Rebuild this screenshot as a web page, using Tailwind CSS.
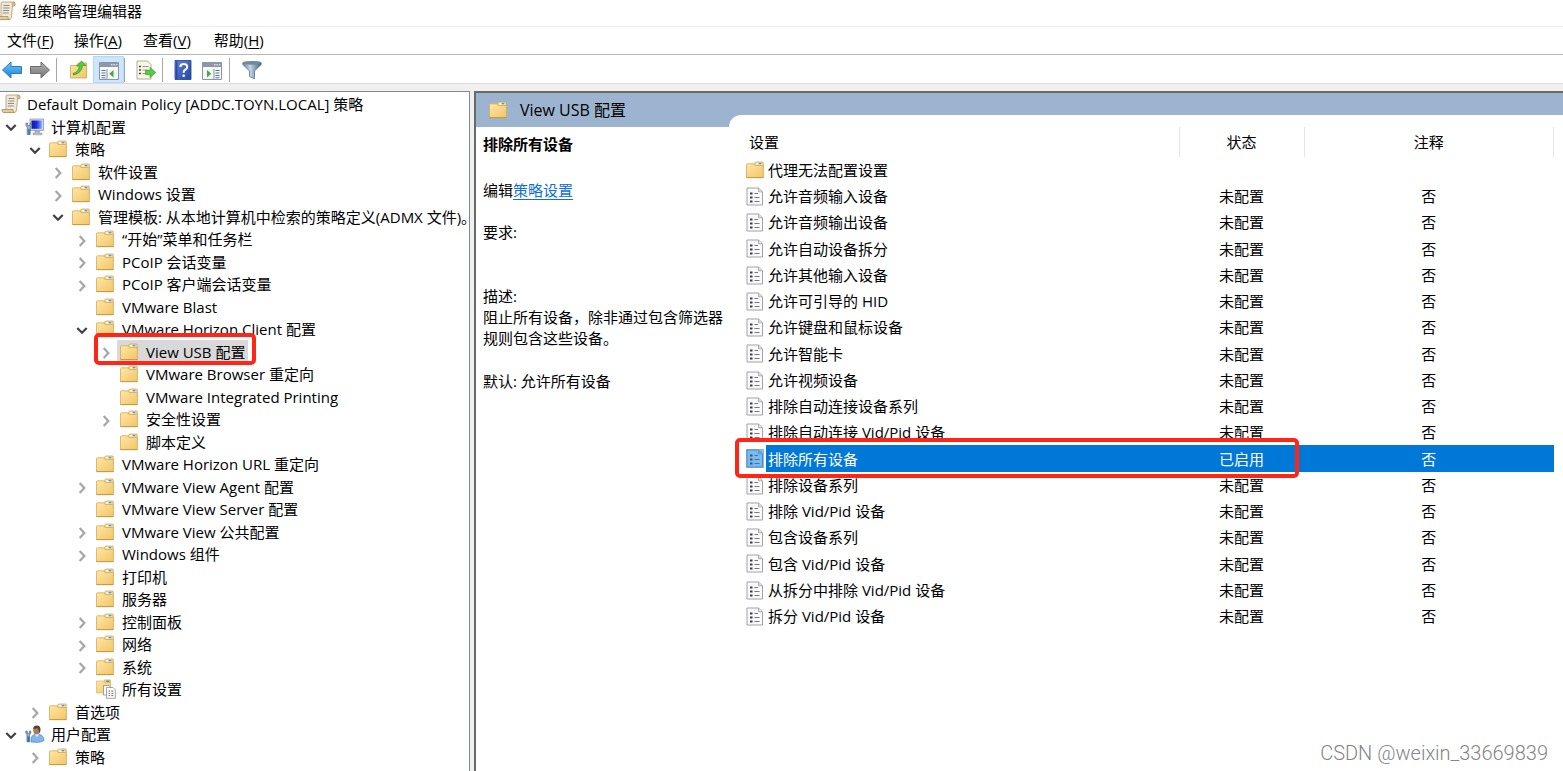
<!DOCTYPE html>
<html lang="zh-CN">
<head>
<meta charset="utf-8">
<title>组策略管理编辑器</title>
<script src="https://cdn.jsdelivr.net/npm/@tailwindcss/browser@4"></script>
</head>
<body class="bg-white text-black text-[15px] font-['Open_Sans','Noto_Sans_CJK_SC',sans-serif]">
<svg width="0" height="0" class="absolute" aria-hidden="true">
  <defs>
    <linearGradient id="gFolder" x1="0" y1="0" x2="1" y2="1"><stop offset="0" stop-color="#ffe7a4"/><stop offset="1" stop-color="#f1c568"/></linearGradient>
    <linearGradient id="gBlue" x1="0" y1="0" x2="0" y2="1"><stop offset="0" stop-color="#6cc8fa"/><stop offset="1" stop-color="#1a82d6"/></linearGradient>
    <linearGradient id="gGray" x1="0" y1="0" x2="0" y2="1"><stop offset="0" stop-color="#b0b0b0"/><stop offset="1" stop-color="#777"/></linearGradient>
    <linearGradient id="gHelp" x1="0" y1="0" x2="1" y2="1"><stop offset="0" stop-color="#5f84dc"/><stop offset="1" stop-color="#2444a8"/></linearGradient>
    <linearGradient id="gFunnel" x1="0" y1="0" x2="1" y2="0"><stop offset="0" stop-color="#5f7f9c"/><stop offset=".4" stop-color="#c4d6e4"/><stop offset="1" stop-color="#3f5d7a"/></linearGradient>
    <linearGradient id="gScreen" x1="0" y1="0" x2="1" y2="0"><stop offset="0" stop-color="#1018a8"/><stop offset=".5" stop-color="#1c2ee0"/><stop offset="1" stop-color="#8fb4f8"/></linearGradient>
    <symbol id="folder" viewBox="0 0 18 18">
      <path d="M7.500 5 9 1.600Q9.200 1 10 1H16.500Q17.300 1 17.300 1.800V8H7.500Z" fill="#f5d68c" stroke="#d0a24c" stroke-width=".7"/>
      <rect x="10.500" y="1.900" width="5.500" height="1.800" fill="#fff"/><rect x="12.500" y="1.900" width="3" height="1.500" fill="#4a9ad8"/>
      <path d="M.5 3.500Q.5 2.800 1.200 2.800H7.800L9 4.500H16.600Q17.400 4.500 17.400 5.300V16.600H.5Z" fill="url(#gFolder)" stroke="#d6ab54" stroke-width=".8"/>
      <path d="M.5 16.600H17.500" stroke="#c0953f" stroke-width=".9"/>
    </symbol>
    <symbol id="scroll" viewBox="0 0 20 20">
      <path d="M5 2Q5 1 6.500 1H17Q19 1 19 3T17.500 4.800H16.500L15.500 16Q15.300 18.500 13 18.500H3L5 15Z" fill="#f3e9cf" stroke="#a89878" stroke-width=".8"/>
      <path d="M16.500 4.800Q15.300 2 17 1Q19 1 19 3T17.500 4.800Z" fill="#d5bf8e" stroke="#a89878" stroke-width=".6"/>
      <path d="M1 15.500H12Q11.500 18.500 13.500 18.600H3Q.6 18.600 1 15.500Z" fill="#e0cc9c" stroke="#a89060" stroke-width=".8"/>
      <path d="M7.500 4.500H13.500M7.300 7H13.300M7 9.500H13M6.800 12H12.800" stroke="#8c8c98" stroke-width="1"/>
    </symbol>
    <symbol id="computer" viewBox="0 0 20 18">
      <path d="M5 1H18.500V12.500H5Z" fill="#d4dae4" stroke="#8d9ab0" stroke-width=".8"/>
      <path d="M6.500 2.500H17V10.800H6.500Z" fill="url(#gScreen)"/>
      <path d="M10 13H14.500V15H17V16.800H8V15H10Z" fill="#b4bac4" stroke="#8a929e" stroke-width=".5"/>
      <path d="M.8 5.200Q.5 8 2.200 9V16.500H5.200V9Q7 8 6.500 5.200L5 5V7.500H2.500V5Z" fill="#9eb6d0" stroke="#56708c" stroke-width=".7"/>
      <path d="M3 11H5V16.500H3Z" fill="#3c82c8"/>
    </symbol>
    <symbol id="user" viewBox="0 0 20 18">
      <path d="M6 17Q5.500 10 10.500 9H13.500Q19 10.500 19 15.500Q17 17.300 12 17.300Z" fill="#83b6ea" stroke="#4a7fb8" stroke-width=".7"/>
      <path d="M10 9.200 12 12 14 9.200Z" fill="#eef5ff"/>
      <ellipse cx="11.500" cy="5" rx="3.300" ry="4.200" fill="#ad7a52"/>
      <path d="M8.200 4Q8.300.4 12 .4T15.500 5Q15.500 8 13.800 8.600Q14.500 5 12.500 3.200Z" fill="#4d4640"/>
      <path d="M.8 6.200Q.5 8.700 2 9.700V16.800H4.600V9.700Q6.200 8.700 5.800 6.200L4.600 6V8.200H2.200V6Z" fill="#9eb6d0" stroke="#3f5c80" stroke-width=".7"/>
      <path d="M2.500 11.500H4.300V16.800H2.500Z" fill="#2f70b8"/>
    </symbol>
    <symbol id="policy" viewBox="0 0 18 19">
      <path d="M1 1H12.500L16.500 4.800V18H1Z" fill="#fafafa" stroke="#a2a2a2" stroke-width="1"/>
      <path d="M12.500 1V4.800H16.500" fill="#dcdcdc" stroke="#a2a2a2" stroke-width=".8"/>
      <path d="M4 5.500H6.500V7.500H4ZM4 9.500H6.500V11.500H4ZM4 13.500H6.500V15.500H4Z" fill="#3c3c4c"/>
      <path d="M8.500 6.500H12M8.500 10.500H13.500M8.500 14.500H13.500" stroke="#777783" stroke-width="1"/>
    </symbol>
    <symbol id="allset" viewBox="0 0 20 20">
      <path d="M7.500 4 8.500.9H14.500V6H7.500Z" fill="#f5d68c" stroke="#d9ae58" stroke-width=".7"/>
      <rect x="10" y="1.500" width="3.500" height="1.500" fill="#4a9ad8"/>
      <path d="M.5 2H7.500L8.500 3.500H14.500V14H.5Z" fill="url(#gFolder)" stroke="#dcb45f" stroke-width=".7"/>
      <path d="M7.500 6.500H13L15 8.500V16H7.500Z" fill="#fff" stroke="#8e8e8e" stroke-width=".8"/>
      <path d="M10.500 8.500H17L19.300 10.800V19.300H10.500Z" fill="#fff" stroke="#8e8e8e" stroke-width=".8"/>
      <path d="M12.500 12H14M12.500 14.300H14M12.500 16.600H14M15.300 12H17.300M15.300 14.300H17.300M15.300 16.600H17.300" stroke="#666672" stroke-width="1"/>
    </symbol>
    <symbol id="open" viewBox="0 0 12 10"><path d="M1.300 2 6 6.800 10.700 2" fill="none" stroke="#404040" stroke-width="2.200"/></symbol>
    <symbol id="closed" viewBox="0 0 10 12"><path d="M3 1.700 7 6 3 10.300" fill="none" stroke="#a6a6a6" stroke-width="1.900"/></symbol>
  </defs>
</svg>

<div class="relative flex h-screen flex-col overflow-hidden">
  <header class="flex h-[27px] shrink-0 items-center gap-[6px] border-b border-[#ececec] pb-[4px]">
    <svg class="-ml-1 h-5 w-5" aria-hidden="true"><use href="#scroll"/></svg>
    <h1 class="text-[15px] leading-5">组策略管理编辑器</h1>
  </header>

  <nav class="flex h-[28px] shrink-0 items-center gap-[6px] border-b border-[#b8b8b8] pb-px" aria-label="菜单">
    <button class="pl-[7px] pr-2 leading-6">文件(<u class="underline-offset-2">F</u>)</button>
    <button class="pl-[6px] pr-2 leading-6">操作(<u class="underline-offset-2">A</u>)</button>
    <button class="pl-[7px] pr-2 leading-6">查看(<u class="underline-offset-2">V</u>)</button>
    <button class="pl-[9px] pr-2 leading-6">帮助(<u class="underline-offset-2">H</u>)</button>
  </nav>

  <div class="flex h-[29px] shrink-0 items-center border-b border-[#dcdcdc] pt-px" role="toolbar" aria-label="工具栏">
    <button class="flex w-6 justify-center pr-px pt-px" aria-label="后退"><svg class="h-5 w-[22px]" viewBox="0 0 22 20"><path d="M1.500 10 10 2V6.500H20.500V13.500H10V18Z" fill="url(#gBlue)" stroke="#2b7cc0" stroke-width="1"/></svg></button>
    <button class="flex w-8 justify-center pt-px" aria-label="前进"><svg class="h-5 w-[22px]" viewBox="0 0 22 20"><path d="M20.500 10 12 2V6.500H1.500V13.500H12V18Z" fill="url(#gGray)" stroke="#6c6c6c" stroke-width="1"/></svg></button>
    <span class="h-6 w-px bg-[#a8a8a8]"></span>
    <button class="ml-[7px] flex h-[27px] w-[29px] items-center justify-center" aria-label="上移一级"><svg class="h-5 w-5" viewBox="0 0 20 20"><path d="M1.500 5.500H8L9.500 3H17.500V18H1.500Z" fill="url(#gFolder)" stroke="#cfa552" stroke-width=".8"/><path d="M4 13.500Q9.500 12 10.500 6H7.500L12.500 1 17 5.500H13.500Q13 13 4.500 15Z" fill="#55cc3c" stroke="#2c9a22" stroke-width=".7"/></svg></button>
    <button class="flex h-[27px] w-[31px] items-center justify-center border border-[#b4d8fa] bg-[#cce6fd] pt-[3px]" aria-label="显示/隐藏控制台树"><svg class="h-[18px] w-5" viewBox="0 0 20 18"><path d="M.5.5H19.500V17.500H.5Z" fill="#f4f6f8" stroke="#8b95a2"/><path d="M1 1H19V5H1Z" fill="#8a98aa"/><path d="M12 2.800H13.500M14.500 2.800H16M17 2.800H18.300M1 6.500H19" stroke="#fff"/><path d="M8 7V17" stroke="#8b95a2"/><path d="M2.500 8.500H6.500M2.500 11H6.500M2.500 13.500H6.500M2.500 15.800H6.500" stroke="#55799c"/><path d="M14.500 8V15.500L10.300 11.800Z" fill="#3fae30"/></svg></button>
    <span class="h-6 w-px bg-[#a8a8a8]"></span>
    <button class="ml-[6px] flex h-[27px] w-[29px] items-center justify-center" aria-label="导出列表"><svg class="h-5 w-5" viewBox="0 0 20 20"><path d="M1 1H11.500L15 4.500V19H1Z" fill="#fbf7e8" stroke="#9b9b8c" stroke-width=".8"/><path d="M3 6.500H5M3 10H5M3 13.500H5" stroke="#444" stroke-width="1.500"/><path d="M6.500 6.500H12.500M6.500 10H12.500M6.500 13.500H12.500" stroke="#999"/><path d="M9.500 10.500H14V7.500L19.700 12.500 14 17.500V14.500H9.500Z" fill="#58cc40" stroke="#30a024" stroke-width=".7"/></svg></button>
    <span class="ml-[2px] h-6 w-px bg-[#a8a8a8]"></span>
    <button class="ml-[3px] flex h-[27px] w-[31px] items-center justify-center pl-[3px]" aria-label="帮助"><svg class="h-5 w-[18px]" viewBox="0 0 18 20"><path d="M1 .5H17V19.500H1Z" fill="url(#gHelp)" stroke="#24408c" stroke-width=".8"/><path d="M2.800 1V19" stroke="#203c90" stroke-width="1"/><path d="M6.300 7Q6.300 4 9.800 4T13.200 7Q13.200 8.500 11.300 9.700T9.700 12.800" fill="none" stroke="#fff" stroke-width="2"/><circle cx="9.700" cy="15.800" r="1.300" fill="#fff"/></svg></button>
    <button class="ml-px flex h-[27px] w-[27px] items-center justify-center pt-[3px]" aria-label="显示/隐藏操作窗格"><svg class="h-[18px] w-5" viewBox="0 0 20 18"><path d="M.5.5H19.500V17.500H.5Z" fill="#f4f6f8" stroke="#8b95a2"/><path d="M1 1H19V5H1Z" fill="#8a98aa"/><path d="M12 2.800H13.500M14.500 2.800H16M17 2.800H18.300M1 6.500H19" stroke="#fff"/><path d="M12 7V17" stroke="#8b95a2"/><path d="M13.500 8.500H17.500M13.500 11H17.500M13.500 13.500H17.500M13.500 15.800H17.500" stroke="#55799c"/><path d="M5 8V15.500L9.200 11.800Z" fill="#3fae30"/></svg></button>
    <span class="ml-[4px] h-6 w-px bg-[#a8a8a8]"></span>
    <button class="ml-[7px] flex h-[27px] w-[29px] items-center justify-center pt-px" aria-label="筛选器"><svg class="h-5 w-5" viewBox="0 0 20 20"><path d="M.8 3Q.8 1.500 10 1.500T19.200 3V4.500L12.500 11V18.800L7.500 16.500V11L.8 4.500Z" fill="url(#gFunnel)" stroke="#56738e" stroke-width=".8"/><ellipse cx="10" cy="3.200" rx="8.300" ry="1.500" fill="#71899e"/></svg></button>
  </div>

  <div class="flex min-h-0 grow bg-[#f0f0f0] pt-[7px]">
    <aside class="w-[31%] max-w-[470px] shrink-0 overflow-hidden border-t border-r border-[#828790] bg-white pt-px">
      <ul id="tree" role="tree" aria-label="控制台树"></ul>
    </aside>

    <main class="ml-1 flex min-w-0 grow flex-col border-t-2 border-l-2 border-[#696969] bg-white">
      <div class="flex min-h-0 grow bg-[#9db4d0]">
        <section class="flex w-[253px] shrink-0 flex-col">
          <h2 class="flex h-[34px] shrink-0 items-center gap-3 pl-3 text-base"><svg class="h-[18px] w-5" aria-hidden="true"><use href="#folder"/></svg>View USB 配置</h2>
          <div class="grow bg-white pl-[7px] pt-[7px] leading-[21px]">
            <h3 class="font-bold">排除所有设备</h3>
            <p class="mt-[25px]">编辑<a href="#" class="text-[#0f6fd6] underline underline-offset-3">策略设置</a></p>
            <p class="mt-[21px]">要求:</p>
            <p class="mt-[43px]">描述:</p>
            <p class="whitespace-nowrap">阻止所有设备，除非通过包含筛选器<br>规则包含这些设备。</p>
            <p class="mt-[22px]">默认: 允许所有设备</p>
          </div>
        </section>
        <section class="mt-[22px] min-w-0 grow rounded-tl-[12px] bg-white pr-[9px] pt-[12px]">
          <table class="w-full table-fixed border-collapse">
            <colgroup><col class="w-[450px]"><col class="w-[125px]"><col></colgroup>
            <thead><tr class="h-[30px]">
              <th class="border-r border-[#e5e5e5] p-0 pl-5 text-left font-normal leading-5">设置</th>
              <th class="border-r border-[#e5e5e5] p-0 text-center font-normal leading-5">状态</th>
              <th class="border-r border-[#e5e5e5] p-0 text-center font-normal leading-5">注释</th>
            </tr></thead>
            <tbody id="rows"></tbody>
          </table>
        </section>
      </div>
    </main>
  </div>
  <p class="absolute bottom-[6px] right-[15px] font-['Roboto',sans-serif] text-[20px] font-light leading-6 text-[#858585]">CSDN @weixin_33669839</p>
</div>

<script>
const indent = ['pl-0', 'pl-0', 'pl-[24px]', 'pl-[47px]', 'pl-[71px]', 'pl-[95px]'];
// level, arrow (o = open, c = closed, empty = none), icon, label
const tree = [
  [0, '', 'scroll', 'Default Domain Policy [ADDC.TOYN.LOCAL] 策略'],
  [1, 'o', 'computer', '计算机配置'],
  [2, 'o', 'folder', '策略'],
  [3, 'c', 'folder', '软件设置'],
  [3, 'c', 'folder', 'Windows 设置'],
  [3, 'o', 'folder', '管理模板: 从本地计算机中检索的策略定义(ADMX 文件)。'],
  [4, 'c', 'folder', '“开始”菜单和任务栏'],
  [4, 'c', 'folder', 'PCoIP 会话变量'],
  [4, 'c', 'folder', 'PCoIP 客户端会话变量'],
  [4, '', 'folder', 'VMware Blast'],
  [4, 'o', 'folder', 'VMware Horizon Client 配置'],
  [5, 'c', 'folder', 'View USB 配置'],
  [5, '', 'folder', 'VMware Browser 重定向'],
  [5, '', 'folder', 'VMware Integrated Printing'],
  [5, 'c', 'folder', '安全性设置'],
  [5, '', 'folder', '脚本定义'],
  [4, '', 'folder', 'VMware Horizon URL 重定向'],
  [4, 'c', 'folder', 'VMware View Agent 配置'],
  [4, '', 'folder', 'VMware View Server 配置'],
  [4, 'c', 'folder', 'VMware View 公共配置'],
  [4, 'c', 'folder', 'Windows 组件'],
  [4, '', 'folder', '打印机'],
  [4, '', 'folder', '服务器'],
  [4, 'c', 'folder', '控制面板'],
  [4, 'c', 'folder', '网络'],
  [4, 'c', 'folder', '系统'],
  [4, '', 'allset', '所有设置'],
  [2, 'c', 'folder', '首选项'],
  [1, 'o', 'user', '用户配置'],
  [2, 'c', 'folder', '策略'],
];
const iconSize = { folder: 'h-[18px] w-[18px] mr-[2px]', scroll: 'h-5 w-5', computer: 'h-[18px] w-5', user: 'h-[18px] w-5', allset: 'h-5 w-5' };
document.getElementById('tree').innerHTML = tree.map(([lv, arrow, icon, label]) => {
  const sel = label === 'View USB 配置';
  const btn = lv === 0 ? '' : arrow
    ? `<button class="flex h-full w-[22px] shrink-0 items-center justify-center pt-[3px]" aria-label="${arrow === 'o' ? '折叠' : '展开'} ${label}">${arrow === 'o' ? '<svg class="h-[10px] w-3"><use href="#open"/></svg>' : '<svg class="h-[14px] w-3"><use href="#closed"/></svg>'}</button>`
    : '<span class="w-[22px] shrink-0"></span>';
  return `<li role="treeitem" aria-level="${lv + 1}" class="relative flex items-center whitespace-nowrap odd:h-[22px] even:h-[23px] ${indent[lv]}">${btn}`
    + `<span class="flex h-full items-center pr-[3px] ${lv === 0 ? 'gap-[6px] pl-px' : 'gap-[6px] pl-[3px]'} ${sel ? 'bg-[#d9d9d9]' : ''}"><svg class="shrink-0 ${iconSize[icon]}" aria-hidden="true"><use href="#${icon}"/></svg><span class="leading-[22px]">${label}</span></span>`
    + (sel ? '<span class="absolute left-[94px] -top-[7px] z-10 h-[32px] w-[162px] rounded-[5px] border-4 border-[#ff2617]"></span>' : '') + '</li>';
}).join('');

const names = ['代理无法配置设置', '允许音频输入设备', '允许音频输出设备', '允许自动设备拆分', '允许其他输入设备', '允许可引导的 HID', '允许键盘和鼠标设备', '允许智能卡', '允许视频设备', '排除自动连接设备系列', '排除自动连接 Vid/Pid 设备', '排除所有设备', '排除设备系列', '排除 Vid/Pid 设备', '包含设备系列', '包含 Vid/Pid 设备', '从拆分中排除 Vid/Pid 设备', '拆分 Vid/Pid 设备'];
document.getElementById('rows').innerHTML = names.map((name, i) => {
  const sel = name === '排除所有设备';
  const icon = i === 0
    ? '<svg class="h-[18px] w-[18px] shrink-0" aria-hidden="true"><use href="#folder"/></svg>'
    : `<span class="relative flex shrink-0"><svg class="h-[19px] w-[18px]" aria-hidden="true"><use href="#policy"/></svg>${sel ? '<span class="absolute inset-0 bg-[#0078d7]/50"></span>' : ''}</span>`;
  return `<tr class="h-[26px] nth-[4n]:h-[27px] ${sel ? 'bg-linear-to-r from-transparent from-[37px] to-[#0078d7] to-[37px] text-white' : ''}">`
    + `<td class="relative p-0 pl-[17px]"><div class="flex items-center gap-[4px]">${icon}<span class="leading-[22px]">${name}</span></div>`
    + (sel ? '<span class="absolute left-[6px] -top-[7px] z-10 h-[40px] w-[564px] rounded-[5px] border-4 border-[#ff2617]"></span>' : '')
    + `</td><td class="p-0 text-center leading-[22px]">${i ? (sel ? '已启用' : '未配置') : ''}</td>`
    + `<td class="p-0 text-center leading-[22px]">${i ? '否' : ''}</td></tr>`;
}).join('');
</script>
</body>
</html>
